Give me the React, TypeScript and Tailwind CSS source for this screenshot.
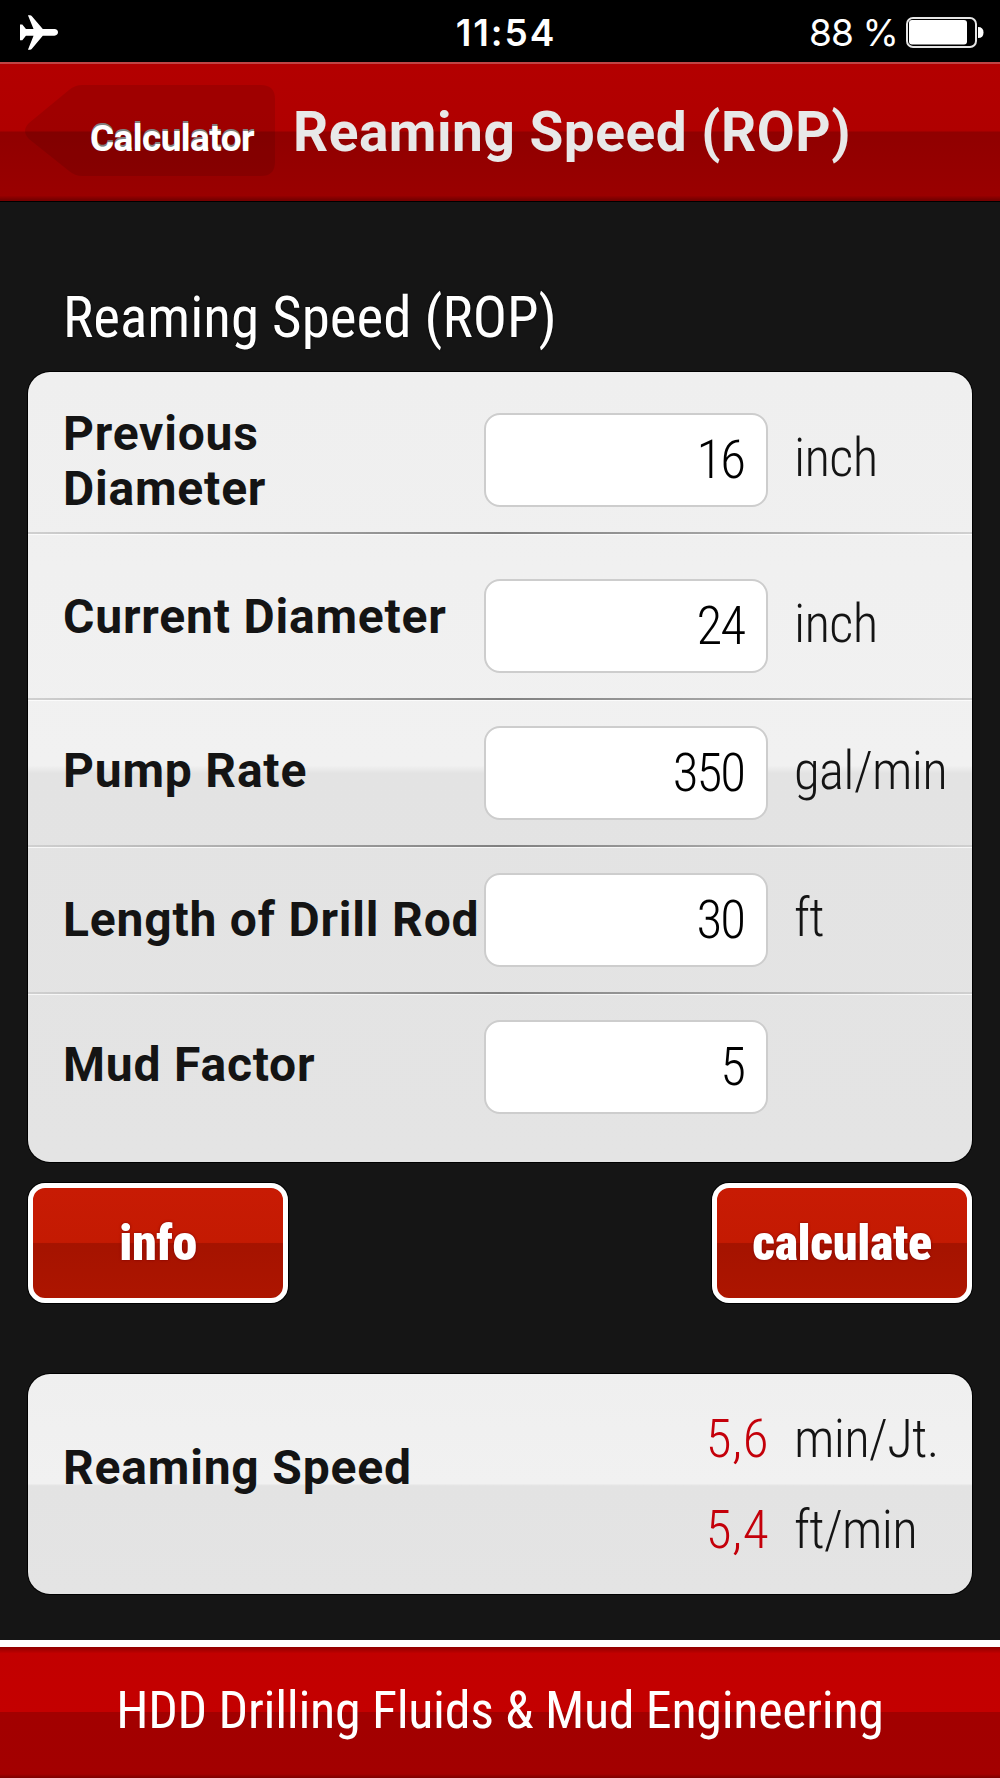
const fields = [
  { label: 'Previous\nDiameter', value: '16', unit: 'inch', row: 'h-[162px] pt-[41px]', labelTop: '-mt-[7px]' },
  { label: 'Current Diameter', value: '24', unit: 'inch', row: 'h-[166px] pt-[45px]', labelTop: 'mt-2.5' },
  { label: 'Pump Rate', value: '350', unit: 'gal/min', row: 'h-[147px] pt-[26px]', labelTop: 'mt-[17px]' },
  { label: 'Length of Drill Rod', value: '30', unit: 'ft', row: 'h-[147px] pt-[26px]', labelTop: 'mt-[19px]' },
  { label: 'Mud Factor', value: '5', unit: '', row: 'h-[168px] pt-[26px]', labelTop: 'mt-[17px]' },
];

const results = [
  { value: '5,6', unit: 'min/Jt.' },
  { value: '5,4', unit: 'ft/min' },
];

const panel =
  'mx-7 overflow-hidden rounded-[22px] shadow-[0_0_0_1px_#000] bg-[linear-gradient(to_bottom,#efefef_0%,#f1f1f1_49.8%,#e3e3e3_50.8%,#e4e4e4_100%)]';
const labelText =
  'w-[421px] shrink-0 whitespace-pre text-[48px] leading-[55px] font-bold tracking-[0.8px] text-[#141414]';
const thinText =
  "font-['Roboto_Condensed',Roboto,sans-serif] text-[53px] leading-[91px] font-light";

const Airplane = () => (
  <svg className="h-[35px] w-[38px]" viewBox="60 42 115 105" fill="#fff">
    <path d="M175 94q0-9-11-10h-35L96 45q-2-3-6-3h-6l17 42H78L67 70h-7v48h7l11-14h23l-17 43h6q4 0 6-3l33-40h35q11-1 11-10z" />
  </svg>
);

const Battery = () => (
  <svg className="ml-2 h-[31px] w-[78px]" viewBox="0 0 78 31">
    <rect x="1" y="1" width="69" height="29" rx="6" fill="none" stroke="#e6e6e6" strokeWidth="2" />
    <rect x="3" y="3" width="58" height="24.5" rx="3" fill="#fff" />
    <path d="M72 10q5.500 0 5.500 5.500t-5.500 5.500z" fill="#fff" />
  </svg>
);

const StatusBar = () => (
  <div className="grid h-[62px] grid-cols-[1fr_auto_1fr] items-center bg-black pt-[3px] pr-4 pl-5 font-[Inter,sans-serif] text-[37px] leading-none text-white">
    <Airplane />
    <span className="pl-2 font-semibold tracking-[1.9px]">11:54</span>
    <div className="flex items-center justify-end">
      <span className="tracking-[-0.9px] whitespace-pre">88 %</span>
      <Battery />
    </div>
  </div>
);

const Header = () => (
  <header className="flex h-[139px] items-center border-t-2 border-[#c04444] bg-[linear-gradient(to_bottom,#b30000_0%,#b00000_48.5%,#900000_50%,#9a0000_96%,#780000_99%)] pl-[25px] shadow-[0_1px_0_#000]">
    <button className="relative -mt-1 h-[91px] w-[250px] shrink-0">
      <svg className="absolute inset-0" width="250" height="91" viewBox="0 0 250 91">
        <path
          d="M57 0H236Q250 0 250 14V77Q250 91 236 91H57Q50 91 44 86L4 54Q-4 46 4 38L44 5Q50 0 57 0Z"
          fill="#000"
          fillOpacity="0.1"
        />
      </svg>
      <span className="relative block pt-4 pl-[65px] text-left text-[37px] font-bold tracking-[-0.6px] text-white [text-shadow:0_-2px_0_#808080]">
        Calculator
      </span>
    </button>
    <h1 className="ml-[18px] text-[55px] leading-none font-bold tracking-[0.5px] whitespace-nowrap text-[#e8e8e8]">
      Reaming Speed (ROP)
    </h1>
  </header>
);

const RedButton = ({ children }: { children: string }) => (
  <button className="h-[120px] w-[260px] rounded-[17px] border-[5px] border-white bg-[linear-gradient(to_bottom,#c81b04_0%,#c41a02_49.5%,#a51300_50.5%,#ad1500_100%)] font-['Roboto_Condensed',Roboto,sans-serif] text-[50px] leading-none font-black tracking-[-0.4px] text-white shadow-[0_0_0_1px_#000] [text-shadow:0_0_3px_#800000]">
    {children}
  </button>
);

export default function App() {
  return (
    <div className="flex h-[1778px] w-[1000px] flex-col overflow-hidden bg-[#151515] font-[Roboto,sans-serif]">
      <StatusBar />
      <Header />

      <h2 className="mt-[87px] mb-6 pl-[63px] font-['Roboto_Condensed',Roboto,sans-serif] text-[57px] leading-[60px] text-white [text-shadow:0_0_2px_#000]">
        Reaming Speed (ROP)
      </h2>

      <div className={panel}>
        {fields.map(({ label, value, unit, row, labelTop }, i) => (
          <div key={label} className={`relative flex items-start pl-[35px] ${row}`}>
            <div className={`${labelText} ${labelTop}`}>{label}</div>
            <div
              className={`${thinText} h-[94px] w-[284px] shrink-0 rounded-[16px] border-2 border-[#cdcdcd] bg-white pr-[22px] text-right leading-[86px] tracking-[-2px] text-black`}
            >
              {value}
            </div>
            <div className={`${thinText} ml-[26px] tracking-[-0.7px] text-[#141414]`}>{unit}</div>
            {i < fields.length - 1 && (
              <div className="absolute inset-x-0 -bottom-px h-[3px]">
                <div className="h-[1.5px] bg-linear-to-r from-[#d0d0d0] via-[#808080] to-[#d0d0d0]" />
                <div className="h-[1.5px] bg-white/70" />
              </div>
            )}
          </div>
        ))}
      </div>

      <div className="mx-7 mt-[21px] mb-[71px] flex justify-between">
        <RedButton>info</RedButton>
        <RedButton>calculate</RedButton>
      </div>

      <div className={`${panel} flex h-[220px] items-start pt-5 pl-[35px]`}>
        <div className={`${labelText} mt-[46px]`}>Reaming Speed</div>
        <div>
          {results.map(({ value, unit }) => (
            <div key={unit} className={`${thinText} flex`}>
              <span className="w-[285px] text-right tracking-[0.5px] text-[#c4000a]">{value}</span>
              <span className="ml-[25px] tracking-[-0.7px] text-[#141414]">{unit}</span>
            </div>
          ))}
        </div>
      </div>

      <footer className="mt-[46px] flex h-[138px] items-center justify-center border-t-[7px] border-white bg-[linear-gradient(to_bottom,#900000_0%,#c20000_5%,#c40000_49.5%,#a20000_50%,#a30000_97%,#7c0000_100%)] pb-[3px] font-['Roboto_Condensed',Roboto,sans-serif] text-[52px] leading-none tracking-[-0.3px] whitespace-nowrap text-white">
        HDD Drilling Fluids &amp; Mud Engineering
      </footer>
    </div>
  );
}
